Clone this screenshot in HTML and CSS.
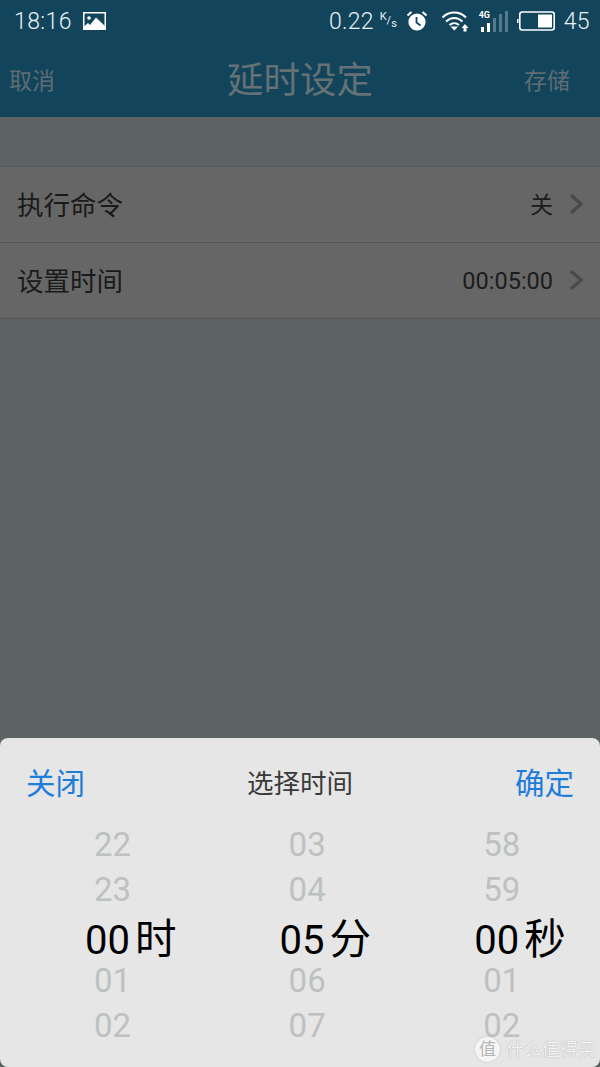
FILE: index.html
```html
<!DOCTYPE html>
<html lang="zh">
<head>
<meta charset="utf-8">
<title>延时设定</title>
<link rel="stylesheet" href="styles.css">
</head>
<body>
<div class="screen">
  <header class="top">
    <div class="status">
      <div class="status-left">
        <span class="clock">18:16</span>
        <svg class="pic" width="23" height="18" viewBox="0 0 23 18"><rect width="23" height="18" fill="#fff"/><rect x="1.500" y="1.500" width="20" height="15" fill="#12455b"/><path d="M0 18V15.500L5 11L7 13L13 5.500L23 15V18Z" fill="#fff"/><circle cx="6" cy="6" r="1.800" fill="#fff"/></svg>
      </div>
      <div class="status-right">
        <span class="speed">0.22</span>
        <span class="unit"><span class="k">K</span>/<span class="s">s</span></span>
        <svg class="alarm" width="22" height="22" viewBox="0 0 22 22"><circle cx="11" cy="12" r="8.600" fill="#fff"/><path d="M10.500 7V12.500L14.500 15.500" fill="none" stroke="#12455b" stroke-width="1.800"/><path d="M1.500 5.500L5.500 2M20.500 5.500L16.500 2" stroke="#fff" stroke-width="2.200" fill="none"/></svg>
        <svg class="wifi" width="27" height="22" viewBox="0 0 27 22"><g fill="none" stroke="#fff" stroke-width="2"><path d="M0.500 7.500C7 .8 17.500 .8 24 7.500"/><path d="M4 11.500C9 6.800 15.500 6.800 20.500 11.500"/><path d="M7.500 15C10.300 12.500 14.200 12.500 17 15"/></g><path d="M8.500 16.500H16L12.250 20.500Z" fill="#fff"/><path d="M23 14L26.500 18H24.500V21.500H21.500V18H19.500Z" fill="#fff"/></svg>
        <div class="signal">
          <span class="lte">4G</span>
          <svg width="30" height="22" viewBox="0 0 30 22"><g fill="#fff"><rect x="2" y="17" width="3" height="5"/><rect x="8" y="13" width="3" height="9"/></g><g fill="#57798a"><rect x="14" y="8" width="3" height="14"/><rect x="20" y="4" width="3" height="18"/><rect x="26" y="1" width="3" height="21"/></g></svg>
        </div>
        <svg class="battery" width="38" height="20" viewBox="0 0 38 20"><rect x="0" y="8" width="1.500" height="4" fill="#fff"/><rect x="2.800" y="1" width="34.400" height="18" rx="2.500" fill="none" stroke="#fff" stroke-width="1.600"/><rect x="21" y="3.500" width="14" height="13" fill="#fff"/></svg>
        <span class="level">45</span>
      </div>
    </div>
    <div class="nav">
      <span class="nav-btn">取消</span>
      <h1 class="nav-title">延时设定</h1>
      <span class="nav-btn">存储</span>
    </div>
  </header>
  <main class="list">
    <div class="row">
      <span class="row-label">执行命令</span>
      <span class="row-value">关</span>
      <svg class="chev" width="14" height="22" viewBox="0 0 14 22"><path d="M2 2L12 11L2 20" fill="none" stroke="#4a4a4a" stroke-width="3.500"/></svg>
    </div>
    <div class="row">
      <span class="row-label">设置时间</span>
      <span class="row-value time">00:05:00</span>
      <svg class="chev" width="14" height="22" viewBox="0 0 14 22"><path d="M2 2L12 11L2 20" fill="none" stroke="#4a4a4a" stroke-width="3.500"/></svg>
    </div>
  </main>
  <section class="sheet">
    <div class="sheet-head">
      <span class="action">关闭</span>
      <span class="sheet-title">选择时间</span>
      <span class="action">确定</span>
    </div>
    <div class="wheels">
      <div class="wheel">
        <span class="tick">22</span>
        <span class="tick">23</span>
        <span class="pick">00<span class="pick-unit">时</span></span>
        <span class="tick low">01</span>
        <span class="tick low">02</span>
      </div>
      <div class="wheel">
        <span class="tick">03</span>
        <span class="tick">04</span>
        <span class="pick">05<span class="pick-unit">分</span></span>
        <span class="tick low">06</span>
        <span class="tick low">07</span>
      </div>
      <div class="wheel">
        <span class="tick">58</span>
        <span class="tick">59</span>
        <span class="pick">00<span class="pick-unit">秒</span></span>
        <span class="tick low">01</span>
        <span class="tick low">02</span>
      </div>
    </div>
  </section>
  <div class="mark">
    <span class="mark-badge">值</span>
    <span class="mark-text">什么值得买</span>
  </div>
</div>
</body>
</html>
```
FILE: styles.css
```css
* { box-sizing: border-box; }
html, body { margin: 0; padding: 0; }
body {
  font-family: Roboto, "Noto Sans CJK SC", sans-serif;
  background: #5d6363;
}
.screen {
  position: relative;
  width: 600px;
  height: 1067px;
  overflow: hidden;
  background: #5d6363;
}
.top { height: 117px; background: #12455b; }
.status {
  height: 42px;
  display: flex;
  justify-content: space-between;
  align-items: center;
  color: #e9f1f4;
  padding: 0 10px 0 14px;
}
.status-left, .status-right { display: flex; align-items: center; }
.clock { font-size: 23px; font-weight: 300; letter-spacing: .4px; }
.pic { margin-left: 11px; }
.speed { font-size: 23px; font-weight: 300; letter-spacing: .2px; }
.unit { font-size: 11px; width: 16px; margin-left: 6px; line-height: 1; display: block; margin-top: -2px; white-space: nowrap; }
.k { vertical-align: 4px; }
.s { vertical-align: -3px; }
.alarm { margin-left: 10px; }
.wifi { margin-left: 14px; }
.signal { position: relative; margin-left: 10px; width: 30px; height: 22px; }
.signal svg { display: block; }
.lte { position: absolute; left: 0; top: 1px; font-size: 9px; line-height: 9px; font-weight: 700; color: #fff; }
.battery { margin-left: 8px; }
.level { font-size: 23px; font-weight: 300; letter-spacing: .4px; margin-left: 9px; }
.nav {
  height: 75px;
  display: flex;
  justify-content: space-between;
  align-items: center;
  padding: 3px 30px 0 9px;
  position: relative;
}
.nav-btn { font-size: 23px; line-height: 1; color: #5f6d73; }
.nav-title {
  position: absolute;
  left: 0;
  right: 0;
  top: 19px;
  margin: 0;
  text-align: center;
  font-size: 36.500px;
  line-height: 40px;
  font-weight: 400;
  color: #657175;
}
.list { margin-top: 49px; border-top: 1px solid #555b5b; }
.row {
  height: 76px;
  display: flex;
  align-items: center;
  padding: 0 17px;
  background: #666;
  border-bottom: 1px solid #555;
  color: #1c1c1c;
}
.row-label { font-size: 26.500px; flex: 1; color: #1a1a1a; margin-top: -2px; }
.row-value { font-size: 23px; margin-top: -3px; }
.time { font-size: 23.500px; margin-top: 1px; }
.chev { margin-left: 16px; display: block; margin-top: -2px; }
.sheet {
  position: absolute;
  left: 0;
  right: 0;
  top: 738px;
  bottom: 0;
  background: #e6e6e6;
  border-radius: 8px;
}
.sheet-head {
  height: 82px;
  padding: 9px 26px 0;
  display: flex;
  justify-content: space-between;
  align-items: center;
}
.action { font-size: 29.500px; line-height: 1; color: #1d7dd9; margin-top: 3px; }
.sheet-title { font-size: 26.500px; line-height: 1; color: #3a3a3a; margin-top: 1px; }
.wheels { display: flex; padding-left: 48px; padding-top: 2px; }
.wheel { flex: none; width: 194.600px; display: flex; flex-direction: column; align-items: flex-start; padding-left: 46px; }
.tick { font-size: 33px; line-height: 45px; height: 45px; color: #bdc1c1; }
.low { position: relative; top: 1px; }
.pick { font-size: 40px; line-height: 45px; height: 45px; color: #000; margin-left: -9px; white-space: nowrap; position: relative; top: 5px; }
.pick-unit { font-size: 41.500px; margin-left: 5px; }
.mark {
  position: absolute;
  left: 475px;
  bottom: 5px;
  display: flex;
  align-items: center;
  gap: 6px;
}
.mark-badge {
  width: 25px;
  height: 25px;
  border-radius: 50%;
  background: #f5f5f5;
  color: #b5b5b5;
  font-size: 17px;
  line-height: 25px;
  text-align: center;
  box-shadow: 0 0 2px rgba(0, 0, 0, .2);
}
.mark-text { font-size: 18px; line-height: 24px; color: #f3f3f3; text-shadow: 0 0 1px rgba(0, 0, 0, .35); }
```
